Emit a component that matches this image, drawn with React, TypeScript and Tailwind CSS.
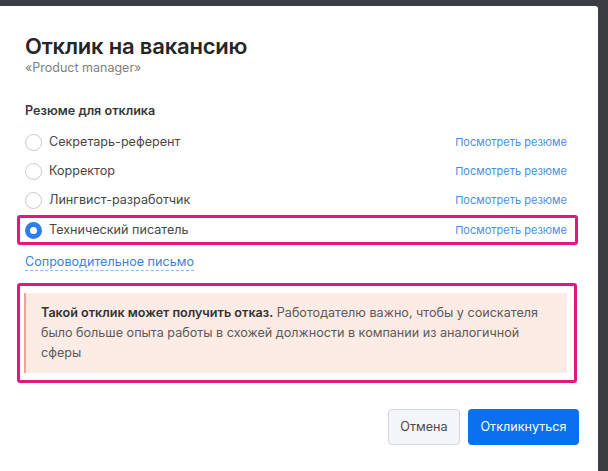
import React from "react";

const items = [
  { label: "Секретарь-референт", selected: false },
  { label: "Корректор", selected: false },
  { label: "Лингвист-разработчик", selected: false },
];

function Radio({ selected }: { selected: boolean }) {
  return selected ? (
    <span className="box-border h-[17px] w-[17px] shrink-0 rounded-full border-[5px] border-[#2f7ded] bg-white" />
  ) : (
    <span className="box-border h-[17px] w-[17px] shrink-0 rounded-full border border-[#c9c9cc] bg-white" />
  );
}

function Row({ label, selected }: { label: string; selected: boolean }) {
  return (
    <div className="flex h-[29px] items-center">
      <Radio selected={selected} />
      <span className="ml-[7px] text-[12.6px] text-[#474747]">{label}</span>
      <span className="ml-auto text-[11px] text-[#4b8fdf]">Посмотреть резюме</span>
    </div>
  );
}

export default function App() {
  return (
    <div
      className="flex h-[471px] w-[608px] flex-col bg-[#3a3d42] pt-[6px]"
      style={{ fontFamily: "Inter, 'Noto Sans', sans-serif" }}
    >
      <div className="flex h-[465px] w-[598px] flex-col rounded-tr-[3px] bg-white pl-[25px] pr-[31px] pt-[27px]">
        <h1 className="text-[22px] font-semibold leading-[26px] tracking-[-0.2px] text-[#262626]">
          Отклик на вакансию
        </h1>
        <div className="text-[12.5px] leading-[18px] text-[#808080]">«Product manager»</div>

        <div className="mt-[25px] text-[12.6px] font-semibold leading-[18px] text-[#383838]">
          Резюме для отклика
        </div>

        <div className="mt-[8px] flex flex-col">
          {items.map((it) => (
            <Row key={it.label} label={it.label} selected={it.selected} />
          ))}
          <div className="-ml-[8px] -mr-[11px] rounded-[3px] border-[3px] border-[#e2187f] pl-[5px] pr-[8px]">
            <div className="flex h-[24px] items-center">
              <Radio selected={true} />
              <span className="ml-[7px] text-[12.6px] text-[#474747]">Технический писатель</span>
              <span className="ml-auto text-[11px] text-[#4b8fdf]">Посмотреть резюме</span>
            </div>
          </div>
        </div>

        <div className="mt-[8px] flex">
          <span className="border-b border-dashed border-[#8fb8ea] text-[12.6px] leading-[17px] text-[#3a82dc]">
            Сопроводительное письмо
          </span>
        </div>

        <div className="-ml-[8px] -mr-[10px] mt-[12px] rounded-[3px] border-[3px] border-[#e2187f] py-[7px] pl-[4px] pr-[7px]">
          <div className="border-l-2 border-[#f2a394] bg-[#fdebe6] pb-[10px] pl-[15px] pr-[10px] pt-[10px]">
            <p className="max-w-[515px] text-[12.6px] leading-[20px] text-[#5a5a5a]">
              <span className="font-semibold text-[#333333]">Такой отклик может получить отказ.</span>{" "}
              Работодателю важно, чтобы у соискателя было больше опыта работы в схожей должности в
              компании из аналогичной сферы
            </p>
          </div>
        </div>

        <div className="-mr-[12px] mt-[26px] flex justify-end gap-[8px]">
          <button className="h-[36px] w-[72px] rounded-[4px] border border-[#d3d6de] bg-[#f4f5f9] text-[12.6px] text-[#4a4a4a]">
            Отмена
          </button>
          <button className="h-[36px] w-[111px] rounded-[4px] bg-[#0b70f0] text-[12.6px] text-white">
            Откликнуться
          </button>
        </div>
      </div>
    </div>
  );
}
